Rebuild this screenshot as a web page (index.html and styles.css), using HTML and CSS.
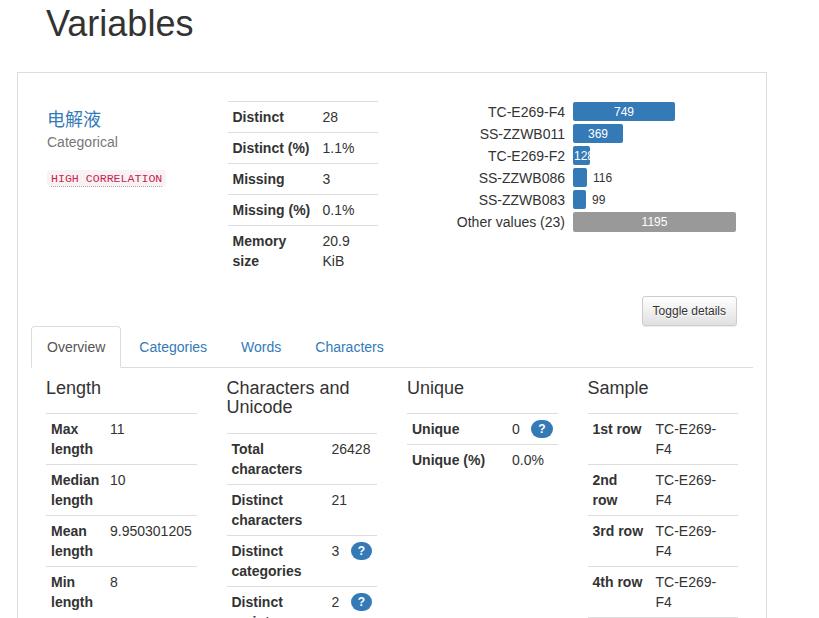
FILE: index.html
```html
<!DOCTYPE html>
<html>
<head>
<meta charset="utf-8">
<title>Variables</title>
<link rel="stylesheet" href="styles.css">
</head>
<body>
<h1 class="page-title">Variables</h1>
<div class="panel">
  <div class="top-row">
    <div class="col-name">
      <p class="var-name"><a href="#">电解液</a></p>
      <p class="var-type">Categorical</p>
      <p class="alerts"><code><abbr title="High correlation">HIGH CORRELATION</abbr></code></p>
    </div>
    <div class="col-stats">
      <table class="stats stats-top">
        <tr><th>Distinct</th><td>28</td></tr>
        <tr><th>Distinct (%)</th><td>1.1%</td></tr>
        <tr><th>Missing</th><td>3</td></tr>
        <tr><th>Missing (%)</th><td>0.1%</td></tr>
        <tr><th>Memory size</th><td>20.9 KiB</td></tr>
      </table>
    </div>
    <div class="col-chart">
      <div class="freq">
        <div class="freq-row"><span class="freq-label">TC-E269-F4</span><span class="bar-cell"><span class="bar" style="width:102px"><span class="bar-text">749</span></span></span></div>
        <div class="freq-row"><span class="freq-label">SS-ZZWB011</span><span class="bar-cell"><span class="bar" style="width:50px"><span class="bar-text">369</span></span></span></div>
        <div class="freq-row"><span class="freq-label">TC-E269-F2</span><span class="bar-cell"><span class="bar" style="width:17px"><span class="bar-text left">128</span></span></span></div>
        <div class="freq-row"><span class="freq-label">SS-ZZWB086</span><span class="bar-cell"><span class="bar" style="width:14px"></span><span class="bar-out">116</span></span></div>
        <div class="freq-row"><span class="freq-label">SS-ZZWB083</span><span class="bar-cell"><span class="bar" style="width:13px"></span><span class="bar-out">99</span></span></div>
        <div class="freq-row"><span class="freq-label">Other values (23)</span><span class="bar-cell"><span class="bar other" style="width:163px"><span class="bar-text">1195</span></span></span></div>
      </div>
    </div>
  </div>
  <div class="toggle-row">
    <button class="btn">Toggle details</button>
  </div>
  <div class="tabs">
    <ul class="nav-tabs">
      <li class="active"><a href="#">Overview</a></li>
      <li><a href="#">Categories</a></li>
      <li><a href="#">Words</a></li>
      <li><a href="#">Characters</a></li>
    </ul>
    <div class="tab-content">
      <div class="col">
        <h4>Length</h4>
        <table class="stats t-length">
          <tr><th>Max length</th><td>11</td></tr>
          <tr><th>Median length</th><td>10</td></tr>
          <tr><th>Mean length</th><td>9.950301205</td></tr>
          <tr><th>Min length</th><td>8</td></tr>
        </table>
      </div>
      <div class="col">
        <h4>Characters and Unicode</h4>
        <table class="stats t-chars">
          <tr><th>Total characters</th><td>26428</td></tr>
          <tr><th>Distinct characters</th><td>21</td></tr>
          <tr><th>Distinct categories</th><td>3 <span class="badge">?</span></td></tr>
          <tr><th>Distinct scripts</th><td>2 <span class="badge">?</span></td></tr>
        </table>
      </div>
      <div class="col">
        <h4>Unique</h4>
        <table class="stats t-unique">
          <tr><th>Unique</th><td>0 <span class="badge">?</span></td></tr>
          <tr><th>Unique (%)</th><td>0.0%</td></tr>
        </table>
      </div>
      <div class="col">
        <h4>Sample</h4>
        <table class="stats t-sample">
          <tr><th>1st row</th><td>TC-E269-F4</td></tr>
          <tr><th>2nd row</th><td>TC-E269-F4</td></tr>
          <tr><th>3rd row</th><td>TC-E269-F4</td></tr>
          <tr><th>4th row</th><td>TC-E269-F4</td></tr>
          <tr><th>5th row</th><td>TC-E269-F4</td></tr>
        </table>
      </div>
    </div>
  </div>
</div>
</body>
</html>
```

FILE: styles.css
```css
* { box-sizing: border-box; }
html, body { margin: 0; padding: 0; background: #fff; }
body {
  font-family: "Liberation Sans", Arial, "Noto Sans CJK SC", sans-serif;
  font-size: 14px;
  line-height: 20px;
  color: #333;
  overflow: hidden;
}
a { color: #337ab7; text-decoration: none; }

.page-title {
  font-size: 36px;
  font-weight: 500;
  line-height: 39.6px;
  margin: 4px 0 28px 46px;
  color: #333;
}

.panel {
  margin-left: 17px;
  width: 750px;
  border: 1px solid #ddd;
  border-bottom: none;
  padding: 28px 12px 0 14px;
  min-height: 600px;
}

.top-row { display: flex; width: 722px; }
.col-name { width: 180.5px; padding: 0 15px; }
.col-stats { width: 180.5px; padding: 0 15px; }
.col-chart { width: 361px; padding: 0 15px; }

.var-name {
  margin: 9px 0 0;
  font-size: 18px;
  line-height: 20px;
  font-family: "Liberation Sans", Arial, "Noto Sans CJK SC", sans-serif;
}
.var-type { margin: 2px 0 0; color: #777; line-height: 20px; }
.alerts { margin: 15px 0 0; line-height: 20px; }
code {
  font-family: "Liberation Mono", "DejaVu Sans Mono", monospace;
  font-size: 11.6px;
  color: #c7254e;
  background: #f9f2f4;
  padding: 2px 4px;
  border-radius: 4px;
}
abbr {
  text-decoration: none;
  border-bottom: 1px dotted #b9a3aa;
  padding-bottom: 1px;
}

.stats { border-collapse: collapse; table-layout: fixed; width: 150.5px; }
.stats th, .stats td {
  padding: 5px;
  vertical-align: top;
  text-align: left;
  line-height: 20px;
  border-top: 1px solid #ddd;
}
.stats th { font-weight: bold; color: #333; }
.stats td { color: #333; }
.stats-top th { width: 90px; }
.t-length th { width: 59px; }
.t-chars th { width: 100px; }
.t-unique th { width: 100px; }
.t-sample th { width: 63px; }
.t-sample td { padding-right: 12px; }

.badge {
  float: right;
  display: inline-block;
  min-width: 10px;
  padding: 3px 7px;
  font-size: 12px;
  font-weight: bold;
  line-height: 12px;
  color: #fff;
  background: #337ab7;
  border-radius: 10px;
  margin-top: 1px;
}

.freq { display: flex; flex-direction: column; padding-top: 1px; }
.freq-row { display: flex; height: 22px; }
.freq-label {
  width: 165px;
  text-align: right;
  padding-right: 8px;
  line-height: 21px;
  white-space: nowrap;
  color: #333;
}
.bar-cell { display: flex; align-items: flex-start; }
.bar {
  display: block;
  height: 19px;
  background: #337ab7;
  border-radius: 2px;
}
.bar.other { background: #999; height: 20px; }
.bar-text {
  display: block;
  color: #fff;
  font-size: 12px;
  line-height: 20px;
  text-align: center;
  white-space: nowrap;
}
.bar-text.left { text-align: left; padding-left: 1px; overflow: visible; }
.bar-out {
  font-size: 12px;
  line-height: 20px;
  margin-left: 6px;
  color: #333;
}

.toggle-row { width: 722px; padding: 20px 17px 0 15px; display: flex; justify-content: flex-end; height: 50px; }
.btn {
  font-family: "Liberation Sans", Arial, sans-serif;
  font-size: 12px;
  line-height: 18px;
  padding: 5px 10px;
  height: 30px;
  color: #333;
  border: 1px solid #ccc;
  border-radius: 3px;
  background: linear-gradient(to bottom, #fff 0, #e0e0e0 100%);
  text-shadow: 0 1px 0 #fff;
  box-shadow: inset 0 1px 0 rgba(255,255,255,.15), 0 1px 1px rgba(0,0,0,.075);
}

.tabs { width: 722px; margin-left: -1px; }
.nav-tabs {
  list-style: none;
  margin: 0;
  padding: 0;
  display: flex;
  border-bottom: 1px solid #ddd;
}
.nav-tabs li { margin-right: 2px; margin-bottom: -1px; }
.nav-tabs a {
  display: block;
  padding: 10px 15px;
  line-height: 20px;
  border: 1px solid transparent;
  border-radius: 4px 4px 0 0;
  color: #337ab7;
}
.nav-tabs li.active a {
  color: #555;
  background: #fff;
  border-color: #ddd #ddd transparent;
}

.tab-content { display: flex; }
.tab-content .col { width: 180.5px; padding: 0 15px; }
.tab-content h4 {
  font-size: 18px;
  font-weight: 500;
  line-height: 19.8px;
  margin: 11px 0 15px;
  color: #333;
}
```
